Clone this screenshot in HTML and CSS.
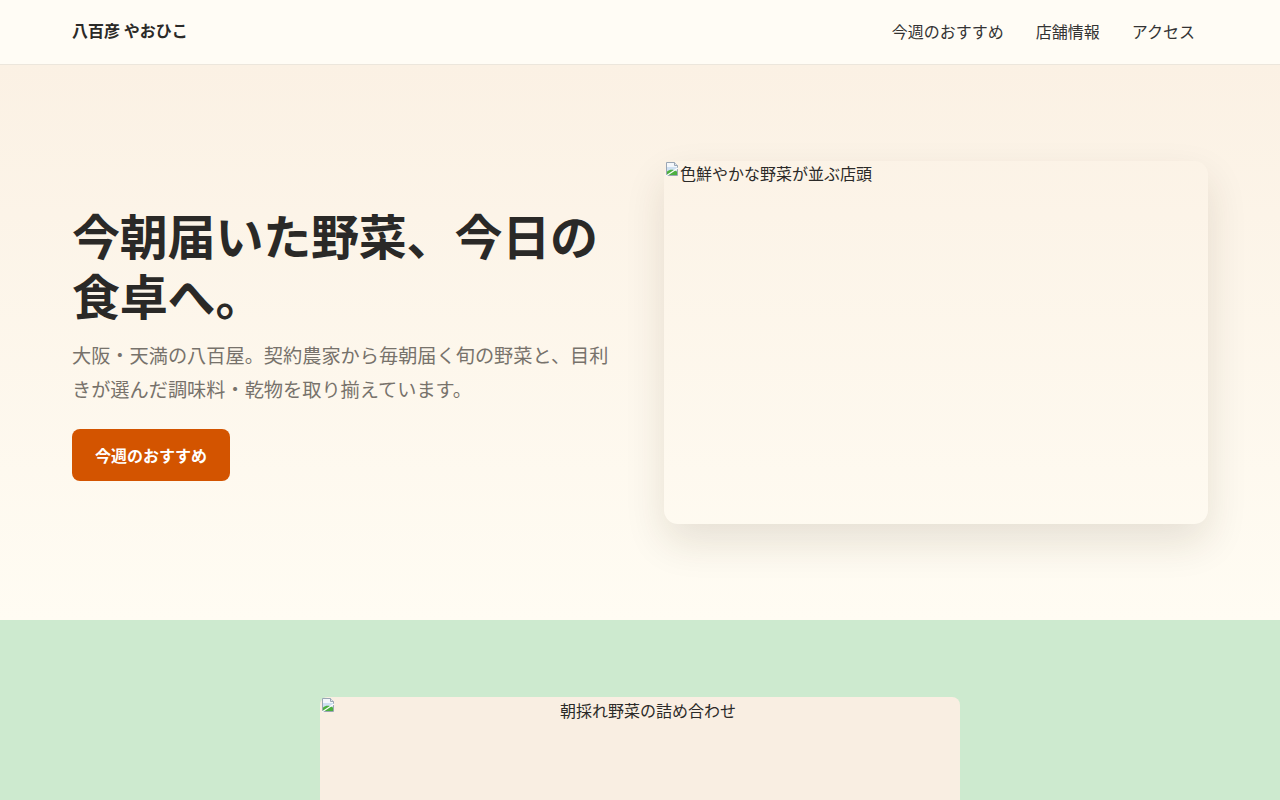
FILE: index.html
```html
<!DOCTYPE html>
<html lang="ja">
<head>
    <meta charset="UTF-8">
    <meta name="viewport" content="width=device-width, initial-scale=1.0">
    <title>八百彦 やおひこ</title>
    <link rel="stylesheet" href="styles.css">
</head>
<body>
    <header class="site-header">
        <div class="wrap header-inner">
            <a class="logo" href="#">八百彦 やおひこ</a>
            <nav class="nav">
                <a href="#picks">今週のおすすめ</a>
                <a href="#shop">店舗情報</a>
                <a href="#access">アクセス</a>
            </nav>
        </div>
    </header>

    <section class="hero">
        <div class="wrap hero-grid">
            <div class="hero-text">
                <h1>今朝届いた野菜、今日の食卓へ。</h1>
                <p class="lead">大阪・天満の八百屋。契約農家から毎朝届く旬の野菜と、目利きが選んだ調味料・乾物を取り揃えています。</p>
                <a class="btn" href="#picks">今週のおすすめ</a>
            </div>
            <div class="hero-photo photo">
                <span class="photo-alt">
                    <svg class="broken" width="16" height="16" viewBox="0 0 16 16">
                        <path d="M2.5 1.5h8l3 3v10h-11z" fill="#f4f7fb" stroke="#9aa6b4"/>
                        <path d="M10.5 1.5v3h3" fill="#dfe5ec" stroke="#9aa6b4"/>
                        <path d="M3 6h10v4H3z" fill="#cfe0f2"/>
                        <path d="M3 14V10.5c3-2.5 6-2.5 10 0V14z" fill="#4caf3f"/>
                        <path d="M2 15L14 7" stroke="#fff" stroke-width="1.2"/>
                    </svg>色鮮やかな野菜が並ぶ店頭</span>
            </div>
        </div>
    </section>

    <section class="picks" id="picks">
        <div class="picks-photo photo">
            <svg class="broken broken-left" width="16" height="16" viewBox="0 0 16 16">
                <path d="M2.5 1.5h8l3 3v10h-11z" fill="#f4f7fb" stroke="#9aa6b4"/>
                <path d="M10.5 1.5v3h3" fill="#dfe5ec" stroke="#9aa6b4"/>
                <path d="M3 6h10v4H3z" fill="#cfe0f2"/>
                <path d="M3 14V10.5c3-2.5 6-2.5 10 0V14z" fill="#4caf3f"/>
                <path d="M2 15L14 7" stroke="#fff" stroke-width="1.2"/>
            </svg>
            <span class="photo-caption">朝採れ野菜の詰め合わせ</span>
        </div>
    </section>
</body>
</html>
```

FILE: styles.css
```css
* {
    box-sizing: border-box;
}
body {
    margin: 0;
    font-family: "Noto Sans CJK JP", "Noto Sans", sans-serif;
    color: #2b2a28;
    background-color: #fffcf5;
}
a {
    color: inherit;
    text-decoration: none;
}
.wrap {
    max-width: 1136px;
    margin: 0 auto;
}

/* header */
.site-header {
    background-color: #fffcf5;
    border-bottom: 1px solid #ece6dc;
}
.header-inner {
    height: 64px;
    display: flex;
    align-items: center;
    justify-content: space-between;
}
.logo {
    font-weight: 700;
    font-size: 16px;
    margin-top: -4px;
}
.nav {
    display: flex;
    gap: 8px;
    margin: -3px 1px 0 0;
}
.nav a {
    padding: 0 12px;
    font-size: 16px;
    color: #333;
}

/* hero */
.hero {
    background: linear-gradient(180deg, #fbf1e4 0%, #fffcf3 100%);
    padding: 96px 0;
}
.hero-grid {
    display: grid;
    grid-template-columns: 1fr 1fr;
    gap: 48px;
    align-items: center;
}
.hero-text h1 {
    margin: 0 0 14px;
    font-size: 48px;
    line-height: 60px;
    font-weight: 700;
    color: #2a2927;
    letter-spacing: -0.2px;
}
.lead {
    margin: 0 0 23px;
    font-size: 19.2px;
    line-height: 34px;
    color: #77726b;
}
.btn {
    display: inline-block;
    background-color: #d35400;
    color: #fff;
    font-weight: 700;
    font-size: 16px;
    line-height: 20px;
    padding: 16px 23px;
    border-radius: 8px;
}
.btn:hover {
    background-color: #b84800;
}

.photo {
    font-size: 16px;
    color: #2b2a28;
}
.broken {
    vertical-align: top;
    flex-shrink: 0;
}
.hero-photo {
    aspect-ratio: 3 / 2;
    border-radius: 14px;
    box-shadow: 0 18px 40px rgba(60, 45, 20, 0.12);
}
.photo-alt {
    display: flex;
    align-items: flex-start;
    line-height: 24px;
}

/* weekly picks */
.picks {
    background-color: #cdeacf;
    padding: 77px 0 80px;
}
.picks-photo {
    width: 640px;
    height: 420px;
    margin: 0 auto;
    background-color: #f9eee2;
    border-radius: 8px;
    text-align: center;
    line-height: 26px;
}
.broken-left {
    float: left;
}
```
